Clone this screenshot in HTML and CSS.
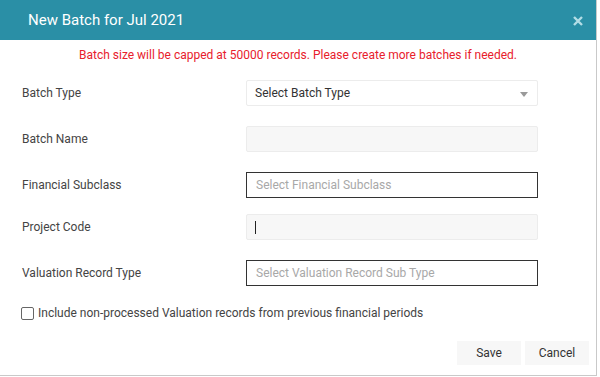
FILE: index.html
```html
<!DOCTYPE html>
<html lang="en">
<head>
    <meta charset="UTF-8">
    <title>New Batch</title>
    <link rel="stylesheet" href="styles.css">
</head>
<body>
    <div class="dialog">
        <div class="dialog-header">
            <span class="dialog-title">New Batch for Jul 2021</span>
            <span class="close">
                <svg width="10" height="10" viewBox="0 0 10 10"><path d="M1 1 L9 9 M9 1 L1 9" stroke="#b3dde6" stroke-width="2.4" fill="none"/></svg>
            </span>
        </div>

        <div class="warning">Batch size will be capped at 50000 records. Please create more batches if needed.</div>

        <form class="batch-form">
            <div class="form-row">
                <label>Batch Type</label>
                <div class="field select">
                    <span>Select Batch Type</span>
                    <span class="arrow"></span>
                </div>
            </div>

            <div class="form-row">
                <label>Batch Name</label>
                <div class="field disabled"></div>
            </div>

            <div class="form-row tight">
                <label>Financial Subclass</label>
                <div class="field outlined"><span class="placeholder">Select Financial Subclass</span></div>
            </div>

            <div class="form-row">
                <label>Project Code</label>
                <div class="field disabled"><span class="caret"></span></div>
            </div>

            <div class="form-row">
                <label>Valuation Record Type</label>
                <div class="field outlined"><span class="placeholder">Select Valuation Record Sub Type</span></div>
            </div>

            <div class="check-row">
                <input type="checkbox" id="include">
                <label for="include">Include non-processed Valuation records from previous financial periods</label>
            </div>

            <div class="actions">
                <button type="button">Save</button>
                <button type="button">Cancel</button>
            </div>
        </form>
    </div>
</body>
</html>
```

FILE: styles.css
```css
body {
    margin: 0;
    font-family: Roboto, "Liberation Sans", sans-serif;
    background-color: white;
    color: #444;
}
.dialog {
    width: 597px;
    height: 376px;
    box-sizing: border-box;
    border-right: 1px solid #c9c9c9;
    border-bottom: 1px solid #c9c9c9;
}
.dialog-header {
    height: 40px;
    background-color: #2a8fa6;
    display: flex;
    align-items: center;
    justify-content: space-between;
    padding: 0 13px 0 28px;
}
.dialog-title {
    color: #fff;
    font-size: 15px;
}
.close {
    display: flex;
    padding-top: 1px;
}
.warning {
    color: #e8202c;
    font-size: 12px;
    line-height: 14px;
    text-align: center;
    margin-top: 8px;
}
.batch-form {
    padding: 0 0 0 22px;
    margin-top: 18px;
}
.form-row {
    display: grid;
    grid-template-columns: 224px 292px;
    align-items: center;
    margin-bottom: 20px;
}
.form-row.tight {
    margin-bottom: 16px;
}
.form-row label {
    font-size: 12px;
}
.field {
    height: 26px;
    box-sizing: border-box;
    border: 1px solid #ececec;
    border-radius: 2px;
    display: flex;
    align-items: center;
    padding: 0 8px;
    font-size: 12px;
}
.select {
    justify-content: space-between;
    background-color: #fff;
    color: #333;
}
.arrow {
    width: 0;
    height: 0;
    border-left: 4px solid transparent;
    border-right: 4px solid transparent;
    border-top: 5px solid #9a9a9a;
    margin-right: 1px;
    margin-top: 2px;
}
.disabled {
    background-color: #f7f7f7;
}
.outlined {
    border: 1px solid #333;
    border-radius: 0;
    padding: 0 9px;
}
.placeholder {
    color: #a8a8a8;
}
.caret {
    width: 1px;
    height: 13px;
    background-color: #222;
}
.check-row {
    display: flex;
    align-items: center;
    margin-left: -1px;
    font-size: 12px;
}
.check-row input {
    appearance: none;
    width: 13px;
    height: 13px;
    margin: 0 4px 0 0;
    border: 1px solid #666;
    border-radius: 2px;
    background: #fff;
}
.actions {
    display: flex;
    justify-content: flex-end;
    gap: 4px;
    margin-top: 21px;
    padding-right: 7px;
}
.actions button {
    width: 64px;
    height: 24px;
    background-color: #f7f7f7;
    border: none;
    border-radius: 0;
    font-family: Roboto, "Liberation Sans", sans-serif;
    font-size: 12px;
    color: #333;
}
```
